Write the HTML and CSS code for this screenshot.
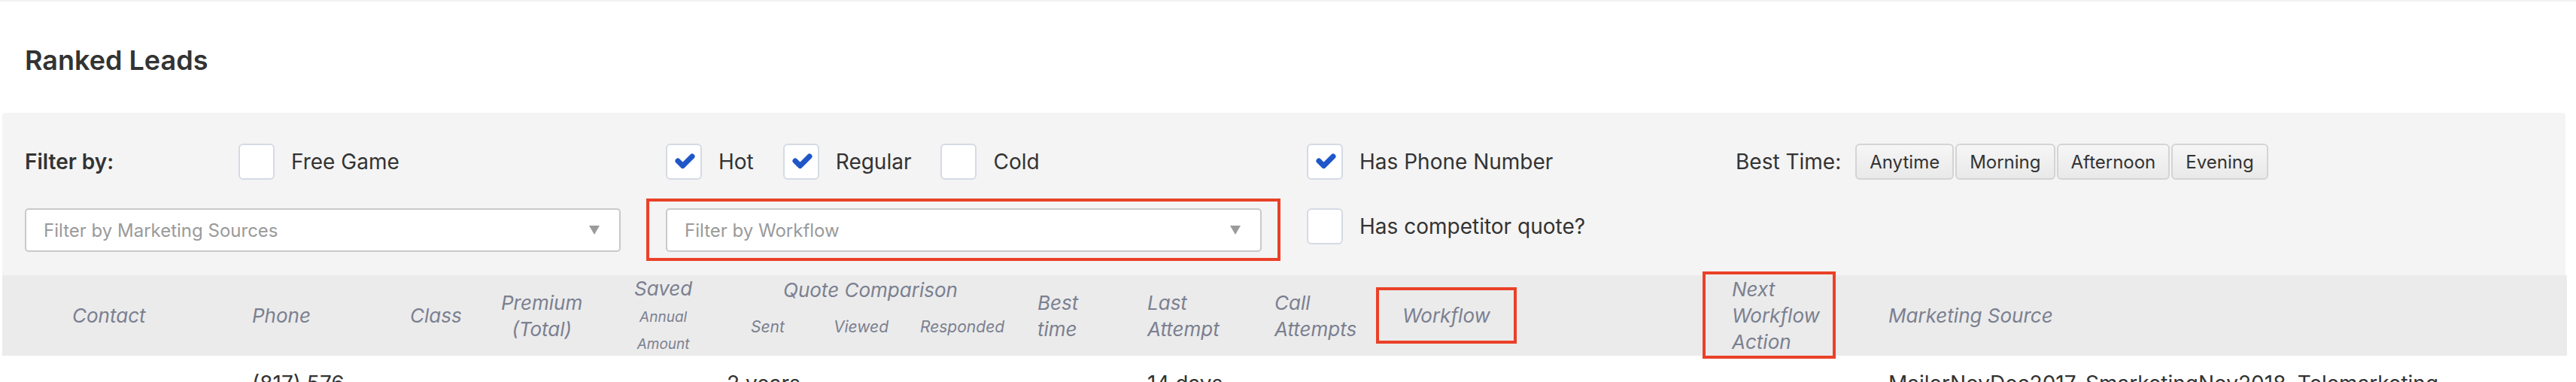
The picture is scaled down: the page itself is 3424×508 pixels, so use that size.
FILE: index.html
```html
<!DOCTYPE html>
<html lang="en">
<head>
<meta charset="utf-8">
<title>Ranked Leads</title>
<link rel="stylesheet" href="styles.css">
</head>
<body>
<div class="topbar"></div>
<h1 class="title">Ranked Leads</h1>
<div class="card">
  <div class="filters">
    <div class="frow frow-1">
      <div class="fcell"><span class="flabel">Filter by:</span></div>
      <div class="fcell">
        <label class="chk"><span class="box"></span>Free Game</label>
      </div>
      <div class="fcell">
        <label class="chk"><span class="box"><svg viewBox="0 0 48 48"><path d="M16 23 L22.5 29.5 L35 17"/></svg></span>Hot</label>
        <label class="chk"><span class="box"><svg viewBox="0 0 48 48"><path d="M16 23 L22.5 29.5 L35 17"/></svg></span>Regular</label>
        <label class="chk"><span class="box"></span>Cold</label>
      </div>
      <div class="fcell">
        <label class="chk"><span class="box"><svg viewBox="0 0 48 48"><path d="M16 23 L22.5 29.5 L35 17"/></svg></span>Has Phone Number</label>
      </div>
      <div class="fcell besttime">
        <span class="bt-label">Best Time:</span>
        <div class="btn-group">
          <button class="btn">Anytime</button>
          <button class="btn">Morning</button>
          <button class="btn">Afternoon</button>
          <button class="btn">Evening</button>
        </div>
      </div>
    </div>
    <div class="frow frow-2">
      <div class="fcell">
        <div class="dd"><span>Filter by Marketing Sources</span><svg class="arrow" viewBox="0 0 14 12"><polygon points="0,0 14,0 7,12"/></svg></div>
      </div>
      <div class="fcell">
        <div class="ddwrap">
          <div class="dd"><span>Filter by Workflow</span><svg class="arrow" viewBox="0 0 14 12"><polygon points="0,0 14,0 7,12"/></svg></div>
          <div class="annot annot-dd"></div>
        </div>
      </div>
      <div class="fcell">
        <label class="chk"><span class="box"></span>Has competitor quote?</label>
      </div>
    </div>
  </div>

  <div class="cols thead">
    <div class="th c1 th-contact">Contact</div>
    <div class="th c2">Phone</div>
    <div class="th c3">Class</div>
    <div class="th c4 th-fit">Premium<br>(Total)</div>
    <div class="th c5 th-fit th-saved">Saved<br><span class="saved-sub">Annual<br>Amount</span></div>
    <div class="th-qc">Quote Comparison</div>
    <div class="th-sub c6 th-sent">Sent</div>
    <div class="th-sub c7">Viewed</div>
    <div class="th-sub c8">Responded</div>
    <div class="th c9">Best<br>time</div>
    <div class="th c10">Last<br>Attempt</div>
    <div class="th c11">Call<br>Attempts</div>
    <div class="th c12 th-box"><span>Workflow</span><div class="annot annot-wf"></div></div>
    <div class="th c13 th-box"><span>Next<br>Workflow<br>Action</span><div class="annot annot-next"></div></div>
    <div class="th c14">Marketing Source</div>
  </div>

  <div class="cols trow">
    <div class="td c2">(817) 576<br>-4412</div>
    <div class="td c6">2 years</div>
    <div class="td c10">14 days</div>
    <div class="td c14">MailerNovDec2017, SmarketingNov2018, Telemarketing</div>
  </div>
</div>
</body>
</html>
```
FILE: styles.css
```css
html, body {
  margin: 0;
  padding: 0;
}

body {
  font-family: Inter, "Liberation Sans", sans-serif;
  color: #333;
  background: #fff;
  overflow: hidden;
}

.topbar {
  height: 2px;
  background: #f2f2f2;
}

.title {
  margin: 56px 0 0 33px;
  font-size: 36px;
  line-height: 44px;
  font-weight: 600;
  color: #333;
}

.card {
  margin: 48px 12px 0 3px;
}

.filters {
  background: #f4f4f4;
  border-radius: 4px 4px 0 0;
  padding: 41px 0 31px 30px;
  margin-right: 2px;
}

.frow {
  display: grid;
}

.frow-1 {
  grid-template-columns: 284px 568px 852px 568px 1fr;
  height: 48px;
  align-items: center;
}

.frow-2 {
  grid-template-columns: 852px 852px 1fr;
  margin-top: 38px;
  align-items: start;
}

.fcell {
  display: flex;
  align-items: center;
}

.flabel {
  font-size: 28px;
  font-weight: 600;
  line-height: 48px;
}

.chk {
  display: inline-flex;
  align-items: center;
  gap: 22px;
  font-size: 28px;
  line-height: 48px;
  margin-right: 39px;
  color: #333;
}

.box {
  display: block;
  width: 48px;
  height: 48px;
  box-sizing: border-box;
  border: 2px solid #d5dae4;
  border-radius: 6px;
  background: #fff;
  flex: none;
}

.box svg {
  display: block;
  width: 48px;
  height: 48px;
  margin: -2px;
}

.box path {
  fill: none;
  stroke: #1f56c8;
  stroke-width: 7;
  stroke-linecap: round;
  stroke-linejoin: round;
}

.besttime {
  display: flex;
  align-items: center;
}

.bt-label {
  font-size: 28px;
  margin-left: 2px;
  margin-right: 19px;
}

.btn-group {
  display: flex;
  gap: 2px;
}

.btn {
  box-sizing: border-box;
  height: 48px;
  padding: 0 17px;
  border: 2px solid #d4d4d4;
  border-radius: 6px;
  background: linear-gradient(#f6f6f6, #e9e9e9);
  font-family: Inter, "Liberation Sans", sans-serif;
  font-size: 24px;
  color: #333;
}

.dd {
  box-sizing: border-box;
  width: 792px;
  height: 58px;
  border: 2px solid #c9c9c9;
  border-radius: 5px;
  background: #fff;
  display: flex;
  align-items: center;
  justify-content: space-between;
  padding: 0 26px 0 23px;
  font-size: 24px;
  color: #9a9a9a;
}

.arrow {
  width: 14px;
  height: 12px;
  fill: #9b9b9b;
}

.ddwrap {
  position: relative;
  width: 792px;
}

.annot {
  position: absolute;
  border: 4px solid #ea4128;
  box-sizing: border-box;
  pointer-events: none;
}

.annot-dd {
  left: -26px;
  top: -13px;
  right: -25px;
  bottom: -12px;
}

.cols {
  display: grid;
  grid-template-columns: 332px 210px 121px 177px 123px 142px 115px 156px 146px 169px 170px 438px 208px 1fr;
}

.thead {
  grid-template-rows: 52px 55px;
  background: #ebebeb;
  color: #7b8090;
  font-style: italic;
  font-size: 26px;
  line-height: 35px;
}

.th {
  grid-row: 1 / 3;
  align-self: center;
}

.c1 { grid-column: 1; }
.c2 { grid-column: 2; }
.c3 { grid-column: 3; }
.c4 { grid-column: 4; }
.c5 { grid-column: 5; }
.c6 { grid-column: 6; }
.c7 { grid-column: 7; }
.c8 { grid-column: 8; }
.c9 { grid-column: 9; }
.c10 { grid-column: 10; }
.c11 { grid-column: 11; }
.c12 { grid-column: 12; }
.c13 { grid-column: 13; }
.c14 { grid-column: 14; }

.th-contact {
  padding-left: 93px;
}

.th-fit {
  justify-self: start;
  text-align: center;
}

.th-saved {
  align-self: start;
}

.saved-sub {
  font-size: 19px;
  line-height: 30px;
}

.th-qc {
  grid-row: 1;
  grid-column: 6 / 9;
  align-self: start;
  margin-top: 2px;
  padding-left: 75px;
}

.th-sub {
  grid-row: 2;
  align-self: start;
  margin-top: 2px;
  font-size: 21px;
  line-height: 30px;
}

.th-sent {
  padding-left: 32px;
}

.th-box {
  align-self: stretch;
  position: relative;
  display: flex;
  align-items: center;
}

.annot-wf {
  left: -35px;
  top: 16px;
  bottom: 16px;
  width: 187px;
}

.annot-next {
  left: -39px;
  top: -5px;
  bottom: -4px;
  width: 177px;
}

.trow {
  padding-top: 17px;
  font-size: 28px;
  line-height: 40px;
  color: #333;
}
```
